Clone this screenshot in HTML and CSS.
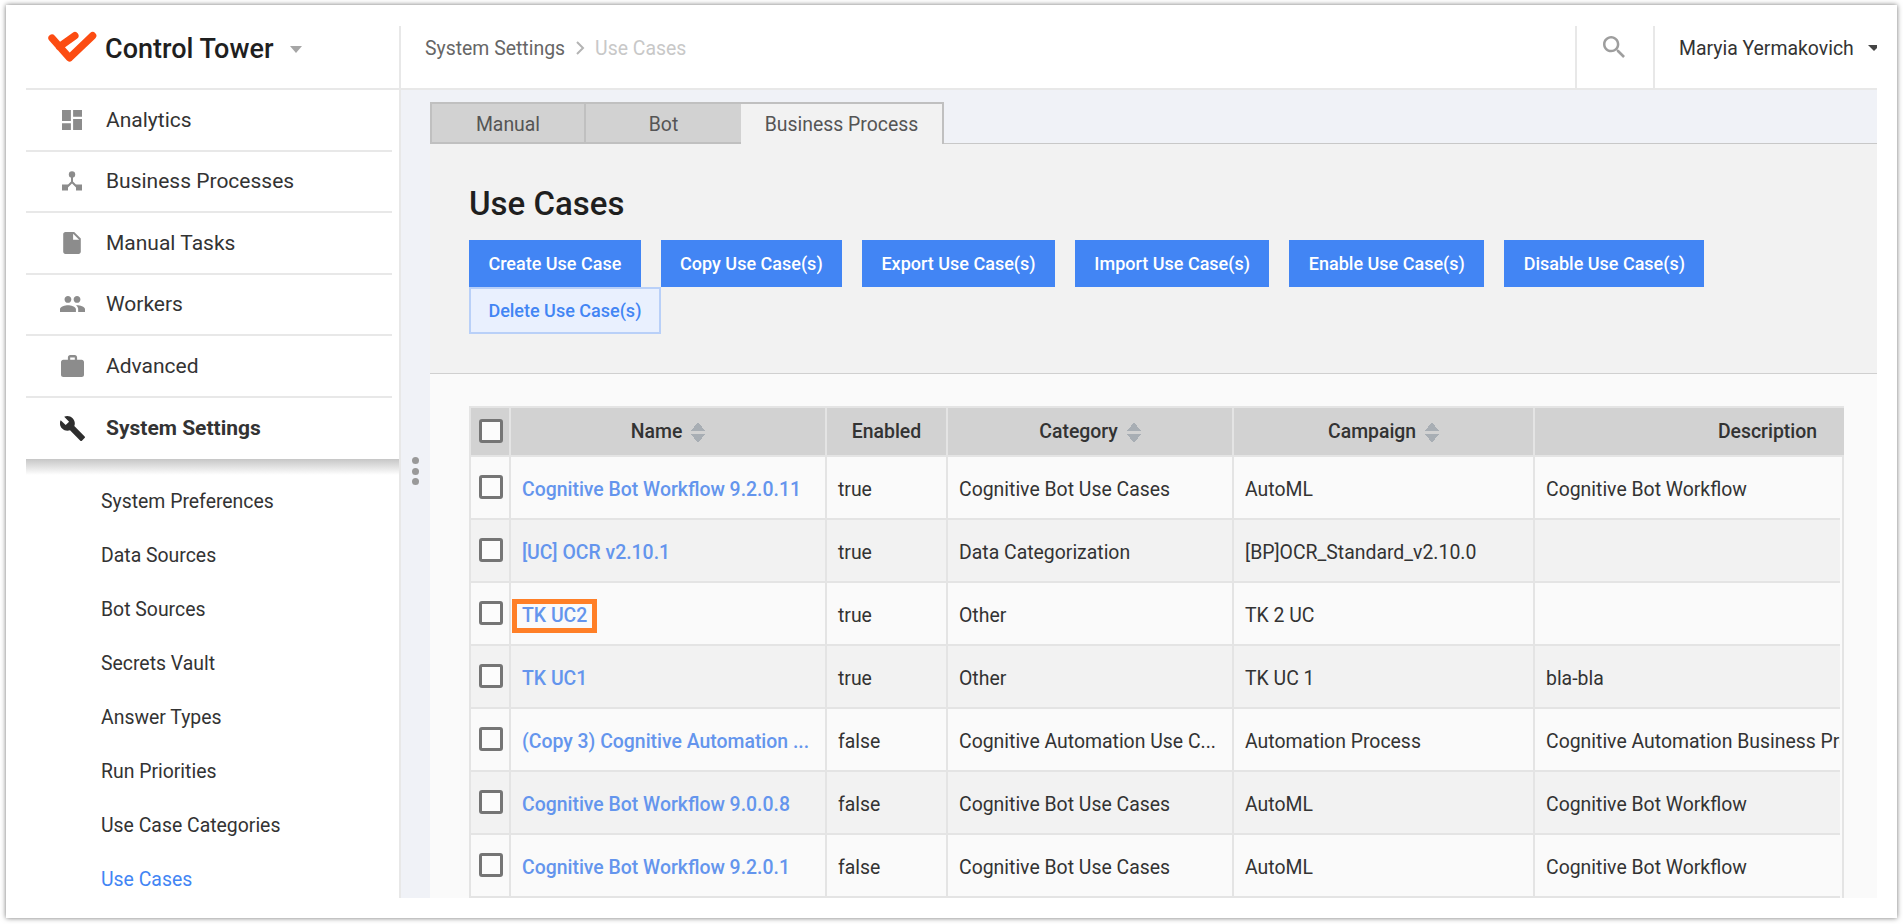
FILE: index.html
```html
<!DOCTYPE html>
<html lang="en">
<head>
	<meta charset="UTF-8">
	<title>Control Tower - Use Cases</title>
	<link rel="stylesheet" href="styles.css">
</head>
<body>
<div class="frame">
	<div class="app">
		<header class="topbar">
			<div class="brand">
				<svg class="logo" viewBox="144 90 146 95" width="49" height="32">
					<path d="M156 111L208 170L277 104M178 137L224 104" fill="none" stroke="#fc4c12" stroke-width="22" stroke-linecap="round" stroke-linejoin="round"/>
				</svg>
				<span class="brand-name">Control Tower</span>
				<span class="caret caret-gray"></span>
			</div>
			<nav class="crumbs">
				<a class="crumb">System Settings</a>
				<svg class="crumb-sep" viewBox="0 0 10 14" width="10" height="14"><path d="M2 1l6 6-6 6" fill="none" stroke="#b4b4b4" stroke-width="2"/></svg>
				<span class="crumb-current">Use Cases</span>
			</nav>
			<div class="search-cell">
				<svg viewBox="3 3 17.5 17.5" width="22" height="22"><path fill="#9e9e9e" d="M15.5 14h-.79l-.28-.27C15.41 12.59 16 11.11 16 9.5 16 5.91 13.09 3 9.5 3S3 5.91 3 9.5 5.91 16 9.5 16c1.61 0 3.09-.59 4.23-1.57l.27.28v.79l5 4.99L20.49 19l-4.99-5zm-6 0C7.01 14 5 11.99 5 9.5S7.01 5 9.5 5 14 7.01 14 9.5 11.99 14 9.5 14z"/></svg>
			</div>
			<div class="user-cell">
				<span class="user-name">Maryia Yermakovich</span>
				<span class="caret caret-dark"></span>
			</div>
		</header>

		<div class="layout">
			<aside class="sidebar">
				<ul class="nav">
					<li class="nav-item">
						<span class="nav-ico"><svg viewBox="3 3 18 18" width="20" height="20"><path fill="#8c8c8c" d="M3 13h8V3H3v10zm0 8h8v-6H3v6zm10 0h8V11h-8v10zm0-18v6h8V3h-8z"/></svg></span>
						Analytics
					</li>
					<li class="nav-item">
						<span class="nav-ico"><svg viewBox="0 0 20 20" width="20" height="20"><g fill="#8c8c8c"><circle cx="10" cy="3.4" r="3.2"/><rect x="0" y="13.5" width="6" height="6"/><rect x="14" y="13.5" width="6" height="6"/></g><path d="M10 6v5M10 11l-6 6M10 11l6 6" fill="none" stroke="#8c8c8c" stroke-width="2"/></svg></span>
						Business Processes
					</li>
					<li class="nav-item">
						<span class="nav-ico"><svg viewBox="4 2 16 20" width="18" height="22"><path fill="#8c8c8c" d="M6 2c-1.1 0-1.99.9-1.99 2L4 20c0 1.1.89 2 1.99 2H18c1.1 0 2-.9 2-2V8l-6-6H6zm7 7V3.5L18.5 9H13z"/></svg></span>
						Manual Tasks
					</li>
					<li class="nav-item">
						<span class="nav-ico"><svg viewBox="1 5 22 14" width="25" height="16"><path fill="#8c8c8c" d="M16 11c1.66 0 2.99-1.34 2.99-3S17.66 5 16 5c-1.66 0-3 1.34-3 3s1.34 3 3 3zm-8 0c1.66 0 2.99-1.34 2.99-3S9.66 5 8 5C6.34 5 5 6.34 5 8s1.34 3 3 3zm0 2c-2.33 0-7 1.17-7 3.5V19h14v-2.5c0-2.33-4.67-3.5-7-3.5zm8 0c-.29 0-.62.02-.97.05 1.16.84 1.97 1.97 1.97 3.45V19h6v-2.5c0-2.33-4.67-3.5-7-3.5z"/></svg></span>
						Workers
					</li>
					<li class="nav-item">
						<span class="nav-ico"><svg viewBox="2 2 20 19" width="23" height="22"><path fill="#8c8c8c" d="M20 6h-4V4c0-1.11-.89-2-2-2h-4c-1.11 0-2 .89-2 2v2H4c-1.11 0-1.99.89-1.99 2L2 19c0 1.11.89 2 2 2h16c1.11 0 2-.89 2-2V8c0-1.11-.89-2-2-2zm-6 0h-4V4h4v2z"/></svg></span>
						Advanced
					</li>
					<li class="nav-item nav-item-open">
						<span class="nav-ico"><svg viewBox="1 1 22 22" width="25" height="25"><path fill="#2e2e2e" d="M22.7 19l-9.1-9.1c.9-2.3.4-5-1.5-6.9-2-2-5-2.4-7.4-1.3L9 6 6 9 1.6 4.7C.4 7.1.9 10.1 2.9 12.1c1.9 1.9 4.6 2.4 6.9 1.5l9.1 9.1c.4.4 1 .4 1.4 0l2.3-2.3c.5-.4.5-1.1.1-1.4z"/></svg></span>
						System Settings
					</li>
				</ul>
				<div class="nav-shadow"></div>
				<ul class="subnav">
					<li class="subnav-item">System Preferences</li>
					<li class="subnav-item">Data Sources</li>
					<li class="subnav-item">Bot Sources</li>
					<li class="subnav-item">Secrets Vault</li>
					<li class="subnav-item">Answer Types</li>
					<li class="subnav-item">Run Priorities</li>
					<li class="subnav-item">Use Case Categories</li>
					<li class="subnav-item subnav-active">Use Cases</li>
				</ul>
			</aside>

			<div class="gutter">
				<i class="dot"></i><i class="dot"></i><i class="dot"></i>
			</div>

			<main class="main">
				<div class="tabs">
					<div class="tab tab-manual">Manual</div>
					<div class="tab tab-bot">Bot</div>
					<div class="tab tab-active">Business Process</div>
					<div class="tabs-rest"></div>
				</div>
				<section class="panel-top">
					<h1 class="page-title">Use Cases</h1>
					<div class="actions">
						<button class="btn">Create Use Case</button>
						<button class="btn">Copy Use Case(s)</button>
						<button class="btn">Export Use Case(s)</button>
						<button class="btn">Import Use Case(s)</button>
						<button class="btn">Enable Use Case(s)</button>
						<button class="btn">Disable Use Case(s)</button>
						<button class="btn btn-light">Delete Use Case(s)</button>
					</div>
				</section>
				<section class="panel-body">
					<div class="grid-head">
						<table class="grid">
							<colgroup><col class="c-check"><col class="c-name"><col class="c-enabled"><col class="c-cat"><col class="c-camp"><col class="c-desc"></colgroup>
							<tr>
								<th class="cell-check"><span class="check"></span></th>
								<th>Name <span class="sort"></span></th>
								<th>Enabled</th>
								<th>Category <span class="sort"></span></th>
								<th>Campaign <span class="sort"></span></th>
								<th>Description</th>
							</tr>
						</table>
					</div>
					<div class="grid-body">
						<div class="grid-clip">
							<table class="grid">
								<colgroup><col class="c-check"><col class="c-name"><col class="c-enabled"><col class="c-cat"><col class="c-camp"><col class="c-desc"></colgroup>
								<tr>
									<td class="cell-check"><span class="check"></span></td>
									<td><a class="link">Cognitive Bot Workflow 9.2.0.11</a></td>
									<td>true</td>
									<td>Cognitive Bot Use Cases</td>
									<td>AutoML</td>
									<td>Cognitive Bot Workflow</td>
								</tr>
								<tr>
									<td class="cell-check"><span class="check"></span></td>
									<td><a class="link">[UC] OCR v2.10.1</a></td>
									<td>true</td>
									<td>Data Categorization</td>
									<td>[BP]OCR_Standard_v2.10.0</td>
									<td></td>
								</tr>
								<tr>
									<td class="cell-check"><span class="check"></span></td>
									<td><a class="link link-marked">TK UC2</a></td>
									<td>true</td>
									<td>Other</td>
									<td>TK 2 UC</td>
									<td></td>
								</tr>
								<tr>
									<td class="cell-check"><span class="check"></span></td>
									<td><a class="link">TK UC1</a></td>
									<td>true</td>
									<td>Other</td>
									<td>TK UC 1</td>
									<td>bla-bla</td>
								</tr>
								<tr>
									<td class="cell-check"><span class="check"></span></td>
									<td><a class="link">(Copy 3) Cognitive Automation ...</a></td>
									<td>false</td>
									<td>Cognitive Automation Use C...</td>
									<td>Automation Process</td>
									<td>Cognitive Automation Business Process</td>
								</tr>
								<tr>
									<td class="cell-check"><span class="check"></span></td>
									<td><a class="link">Cognitive Bot Workflow 9.0.0.8</a></td>
									<td>false</td>
									<td>Cognitive Bot Use Cases</td>
									<td>AutoML</td>
									<td>Cognitive Bot Workflow</td>
								</tr>
								<tr>
									<td class="cell-check"><span class="check"></span></td>
									<td><a class="link">Cognitive Bot Workflow 9.2.0.1</a></td>
									<td>false</td>
									<td>Cognitive Bot Use Cases</td>
									<td>AutoML</td>
									<td>Cognitive Bot Workflow</td>
								</tr>
							</table>
						</div>
					</div>
				</section>
			</main>
		</div>
	</div>
</div>
</body>
</html>
```

FILE: styles.css
```css
* {
	box-sizing: border-box;
	margin: 0;
	padding: 0;
}

html, body {
	height: 924px;
	overflow: hidden;
}

body {
	padding: 5px 6px;
	background-color: #fff;
	font-family: Roboto, "Liberation Sans", sans-serif;
	font-size: 19.42px;
	color: #333;
}

ul {
	list-style: none;
}

.frame {
	height: 913px;
	padding: 21px 20px 20px;
	background-color: #fff;
	box-shadow: 0 0 5px rgba(0, 0, 0, .55);
}

.app {
	display: flex;
	flex-direction: column;
	height: 100%;
	overflow: hidden;
}

/* top bar */
.topbar {
	display: flex;
	flex: none;
	height: 64px;
	border-bottom: 2px solid #e8e8e8;
}

.brand {
	display: flex;
	align-items: center;
	flex: none;
	width: 375px;
	padding: 0 0 16px 22px;
	border-right: 2px solid #e8e8e8;
}

.logo {
	margin-top: -5px;
}

.brand-name {
	margin-left: 8px;
	font-size: 27px;
	font-weight: 500;
	color: #1f1f1f;
}

.caret {
	width: 0;
	height: 0;
	border-left: 6px solid transparent;
	border-right: 6px solid transparent;
}

.caret-gray {
	margin-left: 17px;
	border-top: 7px solid #a6a6a6;
}

.caret-dark {
	flex: none;
	margin-left: 14px;
	border-top: 6px solid #444;
}

.crumbs {
	display: flex;
	flex: 1;
	align-items: center;
	gap: 10px;
	padding: 0 0 18px 24px;
	color: #666;
}

.crumb-current {
	color: #c8c8c8;
}

.search-cell {
	display: flex;
	justify-content: center;
	align-items: center;
	flex: none;
	width: 78px;
	padding: 0 2px 20px 0;
	border-left: 2px solid #e8e8e8;
}

.user-cell {
	display: flex;
	align-items: center;
	flex: none;
	width: 224px;
	padding: 0 0 18px 24px;
	border-left: 2px solid #e8e8e8;
	overflow: hidden;
}

.user-name {
	flex: none;
}

/* layout */
.layout {
	display: flex;
	flex: 1;
	min-height: 0;
	background-color: #f0f2f7;
}

.sidebar {
	flex: none;
	width: 375px;
	border-right: 2px solid #e8e8e8;
	background-color: #fff;
	overflow: hidden;
}

.nav-item {
	display: flex;
	align-items: center;
	height: 61.5px;
	margin-right: 7px;
	padding-left: 33px;
	border-bottom: 2px solid #e8e8e8;
	font-size: 21px;
}

.nav-ico {
	display: flex;
	justify-content: center;
	align-items: center;
	flex: none;
	width: 26px;
	margin-right: 21px;
}

.nav-item-open {
	border-bottom: none;
	font-weight: 700;
}

.nav-shadow {
	height: 16px;
	background: linear-gradient(#c6c6c6, #fff);
}

.subnav-item {
	height: 54px;
	padding-left: 75px;
	line-height: 54px;
}

.subnav-active {
	color: #4285f4;
}

.gutter {
	display: flex;
	flex-direction: column;
	align-items: center;
	flex: none;
	gap: 3.5px;
	width: 29px;
	padding-top: 367px;
}

.dot {
	width: 7px;
	height: 7px;
	border-radius: 50%;
	background-color: #999;
}

/* main */
.main {
	display: flex;
	flex-direction: column;
	flex: 1;
	min-width: 0;
	padding-top: 12px;
}

.tabs {
	display: flex;
	flex: none;
	height: 42px;
}

.tab {
	flex: none;
	height: 42px;
	border: 2px solid #c0c0c0;
	background-color: #d2d2d2;
	text-align: center;
	line-height: 41px;
	color: #555;
}

.tab-manual {
	width: 156px;
}

.tab-bot {
	width: 155px;
	border-left: none;
	border-right: none;
}

.tab-active {
	width: 203px;
	border-bottom: none;
	border-left: none;
	background-color: #f2f2f2;
}

.tabs-rest {
	flex: 1;
	border-bottom: 1px solid #c8c8c8;
}

.panel-top {
	flex: none;
	height: 230px;
	padding: 42px 0 0 39px;
	border-bottom: 1px solid #d0d0d0;
	background-color: #f2f2f2;
}

.page-title {
	font-size: 33px;
	font-weight: 500;
	line-height: 36px;
	color: #1f1f1f;
}

.actions {
	display: flex;
	flex-wrap: wrap;
	column-gap: 20px;
	margin-top: 18px;
}

.btn {
	height: 47px;
	padding: 0 19.4px;
	border: none;
	background-color: #4285f4;
	font-family: inherit;
	font-size: 18px;
	font-weight: 500;
	color: #fff;
}

.btn-light {
	border: 2px solid #b9d0f8;
	padding: 0 17.4px;
	background-color: #e9f0fe;
	color: #4285f4;
}

.panel-body {
	flex: 1;
	padding: 32px 33px 0 39px;
	background-color: #fafafa;
}

/* table */
.grid-head {
	padding-top: 2px;
	border-left: 2px solid #e4e4e4;
	background-color: #e4e4e4;
	overflow: hidden;
}

.grid-body {
	padding-right: 2px;
	border-left: 2px solid #e4e4e4;
	border-right: 2px solid #e4e4e4;
}

.grid-clip {
	overflow: hidden;
}

.grid {
	width: 1531px;
	border-collapse: separate;
	border-spacing: 0;
	table-layout: fixed;
}

.c-check { width: 40px; }
.c-name { width: 316px; }
.c-enabled { width: 121px; }
.c-cat { width: 286px; }
.c-camp { width: 301px; }
.c-desc { width: 467px; }

.grid th {
	height: 49px;
	border-right: 2px solid #e4e4e4;
	border-bottom: 2px solid #e4e4e4;
	background-color: #d2d2d2;
	font-weight: 500;
	text-align: center;
}

.grid td {
	height: 63px;
	padding: 4px 10px 0 11px;
	border-right: 2px solid #e4e4e4;
	border-bottom: 2px solid #e4e4e4;
	white-space: nowrap;
	overflow: hidden;
}

.grid tr:nth-child(odd) td {
	background-color: #fafafa;
}

.grid tr:nth-child(even) td {
	background-color: #f2f2f2;
}

.grid .cell-check {
	padding: 0 0 1px 8px;
	text-align: left;
}

.grid th.cell-check {
	padding: 0 0 2px 8px;
}

.check {
	display: block;
	width: 24px;
	height: 24px;
	border: 3.5px solid #757575;
	border-radius: 3px;
	background-color: #fcfcfc;
}

.sort {
	display: inline-block;
	width: 14px;
	height: 21px;
	margin-left: 4px;
	vertical-align: -5px;
	background:
		linear-gradient(to bottom right, transparent 50%, #a8aeb4 50%) 0 0 / 7px 9px no-repeat,
		linear-gradient(to bottom left, transparent 50%, #a8aeb4 50%) 7px 0 / 7px 9px no-repeat,
		linear-gradient(to top right, transparent 50%, #a8aeb4 50%) 0 12px / 7px 9px no-repeat,
		linear-gradient(to top left, transparent 50%, #a8aeb4 50%) 7px 12px / 7px 9px no-repeat;
}

.link {
	font-weight: 500;
	color: #6495ed;
}

.link-marked {
	display: inline-block;
	margin: 0 -5px;
	padding: 0 5px;
	line-height: 24px;
	outline: 5px solid #ff7f27;
}
```
